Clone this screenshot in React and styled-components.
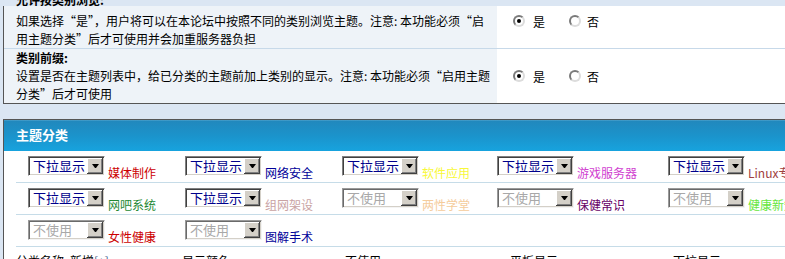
import styled, { createGlobalStyle } from "styled-components"

const GlobalStyle = createGlobalStyle`
  html, body {
    margin: 0;
    padding: 0;
    overflow: hidden;
    background: #dbe6f3;
  }
  body {
    font-family: "Noto Sans CJK SC", "Liberation Sans", sans-serif;
    font-size: 12px;
    color: #000;
  }
`

const Page = styled.div`
    width: 1000px;
    padding: 6px 0 0 3px;
`

// settings table (top)
const SettingTable = styled.div`
    border-left: 1px solid #555;
    border-bottom: 1px solid #555;
`
const SettingRow = styled.div`
    display: grid;
    grid-template-columns: 493px 1fr;
    border-top: ${props => props.$first ? "none" : "1px solid #c7d9e9"};
`
const LeftCell = styled.div`
    background: #eef3f8;
    padding: 0 12px;
    line-height: 18px;
`
const Title = styled.div`
    font-weight: bold;
    margin-top: ${props => props.$first ? "-15px" : "0"};
    margin-bottom: ${props => props.$first ? "3px" : "0"};
`
const Desc = styled.div`
    white-space: nowrap;
`
const RightCell = styled.div`
    background: #fff;
    padding: ${props => props.$top}px 0 0 16px;
`
const RadioGroup = styled.div`
    display: flex;
    align-items: center;
    height: 18px;
`
const Radio = styled.span`
    box-sizing: border-box;
    width: 12px;
    height: 12px;
    border-radius: 50%;
    border: 2px solid;
    border-color: #7a7a7a #dcdcdc #dcdcdc #7a7a7a;
    background: #fff;
    display: flex;
    align-items: center;
    justify-content: center;
    &::after {
        content: "";
        width: 4px;
        height: 4px;
        border-radius: 50%;
        background: ${props => props.$checked ? "#000" : "transparent"};
    }
`
const RadioText = styled.span`
    margin: 0 ${props => props.$last ? "0" : "24px"} 0 ${props => props.$last ? "6px" : "8px"};
`

// category table (bottom)
const CatTable = styled.div`
    margin-top: 15px;
    border-left: 1px solid #555;
    border-top: 1px solid #555;
    background: #fff;
`
const Header = styled.div`
    height: 31px;
    line-height: 29px;
    padding-left: 12px;
    color: #fff;
    font-weight: bold;
    font-size: 13px;
    background: linear-gradient(to bottom, #5aa9d0 0, #2188bd 1px, #1b93cb 50%, #17a3de 100%);
`
const CatBody = styled.div`
    padding-left: 12px;
`
const CatRow = styled.div`
    display: grid;
    grid-template-columns: 157px 157px 155px 171px 1fr;
    height: 32px;
    box-sizing: border-box;
    border-bottom: 1px solid #c6dce8;
`
const CatCell = styled.div`
    display: flex;
    align-items: flex-end;
    padding: 0 0 2px 12px;
    white-space: nowrap;
    overflow: hidden;
`
const FakeSelect = styled.div`
    box-sizing: border-box;
    width: 77px;
    height: 20px;
    margin-bottom: 4px;
    flex-shrink: 0;
    display: flex;
    align-items: center;
    background: #fff;
    border: 1px solid;
    border-color: ${props => props.$disabled ? "#9a9a9a #f4f4f4 #f4f4f4 #9a9a9a" : "#808080 #fff #fff #808080"};
    box-shadow: inset 1px 1px ${props => props.$disabled ? "#6a6a6a" : "#404040"}, inset -1px -1px #d4d0c8;
`
const SelectText = styled.span`
    padding-left: 4px;
    font-size: 13px;
    line-height: 18px;
    color: ${props => props.$disabled ? "#a8a8a8" : "#00008b"};
`
const ArrowBtn = styled.span`
    margin-left: auto;
    margin-right: 1px;
    width: 16px;
    height: 16px;
    box-sizing: border-box;
    background: #d4d0c8;
    box-shadow: inset -1px -1px #404040, inset 1px 1px #fff, inset -2px -2px #808080;
    display: flex;
    align-items: center;
    justify-content: center;
    &::after {
        content: "";
        width: 1px;
        height: 0;
        border-left: 3px solid transparent;
        border-right: 3px solid transparent;
        border-top: 4px solid #000;
    }
`
const CatLabel = styled.span`
    margin-left: 3px;
    line-height: 14px;
    color: ${props => props.color};
`
const HeadRow = styled.div`
    display: grid;
    grid-template-columns: 166px 163px 165px 163px 1fr;
    padding-top: 5px;
    line-height: 18px;
`
const AddLink = styled.span`
    color: #3a5a8a;
`

const categories = [
    [
        { v: "下拉显示", name: "媒体制作", c: "#cc0000" },
        { v: "下拉显示", name: "网络安全", c: "#000099" },
        { v: "下拉显示", name: "软件应用", c: "#f8f838" },
        { v: "下拉显示", name: "游戏服务器", c: "#d040d0" },
        { v: "下拉显示", name: "Linux专区", c: "#a04040" },
    ],
    [
        { v: "下拉显示", name: "网吧系统", c: "#228833" },
        { v: "下拉显示", name: "组网架设", c: "#c9a3a3" },
        { v: "不使用", name: "两性学堂", c: "#f5cc9c" },
        { v: "不使用", name: "保健常识", c: "#660066" },
        { v: "不使用", name: "健康新知", c: "#66e640" },
    ],
    [
        { v: "不使用", name: "女性健康", c: "#cc0000" },
        { v: "不使用", name: "图解手术", c: "#000099" },
    ],
]

const RadioPair = ({ top }) => (
    <RightCell $top={top}>
        <RadioGroup>
            <Radio $checked />
            <RadioText>是</RadioText>
            <Radio />
            <RadioText $last>否</RadioText>
        </RadioGroup>
    </RightCell>
)

const App = () => {
  return (
    <Page>
        <GlobalStyle />
        <SettingTable>
            <SettingRow $first>
                <LeftCell>
                    <Title $first>允许按类别浏览:</Title>
                    <Desc>如果选择“是”，用户将可以在本论坛中按照不同的类别浏览主题。注意: 本功能必须“启</Desc>
                    <Desc>用主题分类”后才可使用并会加重服务器负担</Desc>
                </LeftCell>
                <RadioPair top={6} />
            </SettingRow>
            <SettingRow>
                <LeftCell>
                    <Title>类别前缀:</Title>
                    <Desc>设置是否在主题列表中，给已分类的主题前加上类别的显示。注意: 本功能必须“启用主题</Desc>
                    <Desc>分类”后才可使用</Desc>
                </LeftCell>
                <RadioPair top={18} />
            </SettingRow>
        </SettingTable>

        <CatTable>
            <Header>主题分类</Header>
            <CatBody>
                {categories.map((row, i) => (
                    <CatRow key={i}>
                        {row.map((item) => {
                            const off = item.v === "不使用"
                            return (
                                <CatCell key={item.name}>
                                    <FakeSelect $disabled={off}>
                                        <SelectText $disabled={off}>{item.v}</SelectText>
                                        <ArrowBtn />
                                    </FakeSelect>
                                    <CatLabel color={item.c}>{item.name}</CatLabel>
                                </CatCell>
                            )
                        })}
                    </CatRow>
                ))}
                <HeadRow>
                    <span>分类名称: 新增<AddLink>[+]</AddLink></span>
                    <span>显示颜色</span>
                    <span>不使用</span>
                    <span>平板显示</span>
                    <span>下拉显示</span>
                </HeadRow>
            </CatBody>
        </CatTable>
    </Page>
  )
}

export default App
